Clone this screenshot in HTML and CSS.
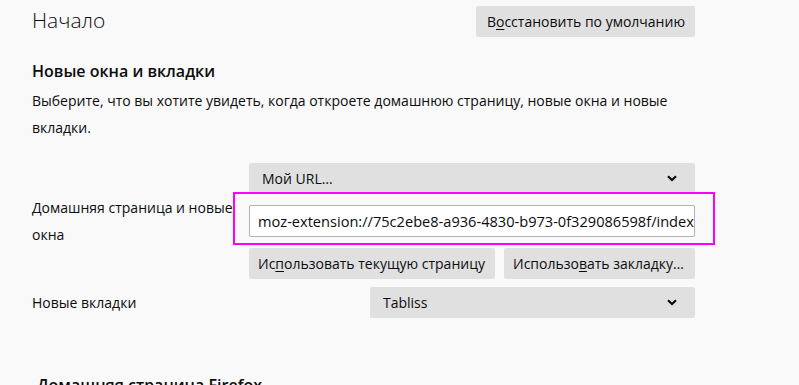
FILE: index.html
```html
<!DOCTYPE html>
<html lang="ru">
<head>
<meta charset="utf-8">
<title>Начало</title>
<link rel="stylesheet" href="styles.css">
</head>
<body>
<main class="page">
  <header class="header">
    <h1 class="title">Начало</h1>
    <button class="btn">В<u>о</u>сстановить по умолчанию</button>
  </header>

  <section class="section">
    <h2 class="section-title">Новые окна и вкладки</h2>
    <p class="desc">Выберите, что вы хотите увидеть, когда откроете домашнюю страницу, новые окна и новые вкладки.</p>

    <div class="row">
      <div class="label label-home">Домашняя страница и новые окна</div>
      <div class="controls">
        <div class="select">
          <span>Мой URL…</span>
          <svg class="chev" width="10" height="7" viewBox="0 0 10 7"><path d="M1 1.2 L5 5 L9 1.2" fill="none" stroke="#0c0c0d" stroke-width="2.2"/></svg>
        </div>
        <div class="input">moz-extension://75c2ebe8-a936-4830-b973-0f329086598f/index.html</div>
        <div class="btn-row">
          <button class="btn btn-cur">Ис<u>п</u>ользовать текущую страницу</button>
          <button class="btn btn-bm">Использо<u>в</u>ать закладку…</button>
        </div>
      </div>
      <div class="highlight"></div>
    </div>

    <div class="row row-tabs">
      <div class="label">Новые вкладки</div>
      <div class="select select-tabs">
        <span>Tabliss</span>
        <svg class="chev" width="10" height="7" viewBox="0 0 10 7"><path d="M1 1.2 L5 5 L9 1.2" fill="none" stroke="#0c0c0d" stroke-width="2.2"/></svg>
      </div>
    </div>
  </section>

  <section class="section section-ff">
    <h2 class="section-title">Домашняя страница Firefox</h2>
  </section>
</main>
</body>
</html>
```

FILE: styles.css
```css
html, body {
  margin: 0;
  padding: 0;
  background: #f9f9fa;
}
body {
  font-family: "Open Sans", "Noto Sans", sans-serif;
  font-size: 14px;
  color: #0c0c0d;
  overflow: hidden;
}
.page {
  width: 663px;
  padding: 6px 0 0 32px;
}
.header {
  display: flex;
  justify-content: space-between;
  align-items: flex-start;
}
.title {
  margin: 0;
  font-size: 21px;
  font-weight: 300;
  line-height: 28px;
}
.btn {
  font-family: inherit;
  font-size: 14px;
  color: #0c0c0d;
  background: #e0e0e1;
  border: none;
  border-radius: 2px;
  height: 31px;
  padding: 0 9px;
  margin: 0;
  white-space: nowrap;
}
.header .btn { padding: 0 10px 0 11px; }
.btn u { text-underline-offset: 2px; }
.section-title {
  margin: 0;
  font-size: 16px;
  font-weight: 600;
  line-height: 24px;
}
.section { margin-top: 22px; }
.desc {
  margin: 4px 0 0;
  line-height: 27px;
}
.row {
  position: relative;
  display: flex;
  align-items: center;
  justify-content: space-between;
  margin-top: 22px;
}
.row-tabs { margin-top: 8px; }
.label {
  line-height: 27px;
}
.label-home { width: 210px; }
.controls {
  width: 446px;
  display: flex;
  flex-direction: column;
  gap: 11px;
}
.select {
  height: 31px;
  background: #e0e0e1;
  border-radius: 2px;
  display: flex;
  align-items: center;
  justify-content: space-between;
  padding: 0 18px 0 13px;
  box-sizing: border-box;
}
.select-tabs { width: 325px; }
.chev { display: block; }
.input {
  height: 32px;
  box-sizing: border-box;
  background: #fff;
  border: 1px solid #b1b1b3;
  border-radius: 2px;
  padding: 0 8px;
  font-size: 14.6px;
  line-height: 30px;
  white-space: nowrap;
  overflow: hidden;
}
.btn-row {
  display: flex;
  justify-content: space-between;
}
.btn-cur { width: 246px; text-align: left; }
.btn-bm { width: 191px; text-align: left; }
.highlight {
  position: absolute;
  left: 201px;
  top: 29px;
  width: 482px;
  height: 53px;
  box-sizing: border-box;
  border: 2px solid #ff00ff;
  pointer-events: none;
}
.section-ff { margin-top: 55px; padding-left: 5px; }
```
